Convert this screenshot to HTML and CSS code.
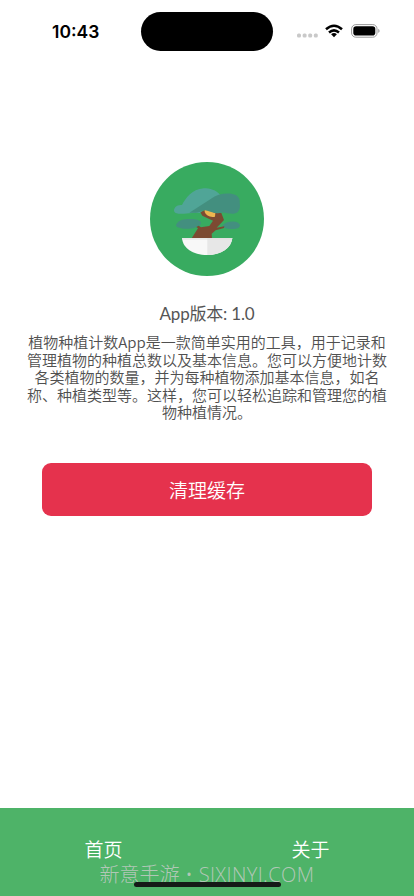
FILE: index.html
```html
<!DOCTYPE html>
<html lang="zh-CN">
<head>
<meta charset="utf-8">
<meta name="viewport" content="width=device-width, initial-scale=1">
<title>关于</title>
<link rel="stylesheet" href="styles.css">
</head>
<body>
<div class="screen">
  <header class="status">
    <div class="time">10:43</div>
    <div class="island"></div>
    <div class="indicators">
      <svg class="dots" viewBox="0 0 21 5"><g fill="#c9c9c9"><rect x="0" y=".5" width="4" height="4" rx="1.5"/><rect x="5.6" y=".5" width="4" height="4" rx="1.5"/><rect x="11.2" y=".5" width="4" height="4" rx="1.5"/><rect x="16.8" y=".5" width="4" height="4" rx="1.5"/></g></svg>
      <svg class="wifi" viewBox="0 0 18 14"><g fill="none" stroke="#000" stroke-width="2.5"><path d="M1 5.2Q9-1.8 17 5.2"/><path d="M4 8.5Q9 4.2 14 8.5"/></g><path d="M6.1 10.2Q9 7.8 11.9 10.2L9 13.2Z"/></svg>
      <svg class="battery" viewBox="0 0 29 14"><rect x=".6" y=".6" width="25.4" height="12.6" rx="4.2" fill="none" stroke="#999"/><rect x="2.3" y="2.2" width="22" height="9.4" rx="2.8"/><path d="M27.4 4.8Q29.6 6.9 27.4 9Z" fill="#888"/></svg>
    </div>
  </header>
  <main class="about">
    <svg class="logo" viewBox="29 34 342 342">
      <circle cx="200" cy="205" r="171" fill="#38ab60"/>
      <path d="M107 226C108 213 123 204 146 205C161 204 180 207 182 216C181 226 170 227 163 231C145 237 116 235 107 226Z" fill="#438f7f"/>
      <path d="M247 229C247 220 255 219 261 215C278 209 297 214 299 224C298 235 284 236 270 235C260 235 255 232 247 229Z" fill="#438f7f"/>
      <path d="M154 263L173 233L168 229L175 225L182 230L207 226L218 210L186 195L180 185L197 177L243 187L251 208L229 231L252 227L251 232L226 239L214 249L215 263Z" fill="#7c4a32"/>
      <path d="M193 174L225 187L224 198C209 201 197 195 193 184Z" fill="#edb650"/>
      <path d="M102 183C98 172 110 161 125 163C136 143 153 116 191 113C214 111 233 123 242 136L178 187C155 184 143 190 127 189C114 190 105 188 102 183Z" fill="#50a597"/>
      <path d="M147 186L211 145C230 131 255 126 276 130C291 132 301 145 298 157C302 174 294 188 280 189C261 190 253 182 237 187C222 191 206 180 191 178C178 187 161 187 147 186Z" fill="#438f7f"/>
      <path d="M125 262H276C273 292 243 313 200 313C157 313 127 292 125 262Z" fill="#f8f8f8"/>
      <path d="M201 262H276C273 292 243 313 201 313Z" fill="#e7e7e7"/>
      <path d="M125 262H276L275 267H126Z" fill="#ddd" opacity=".6"/>
    </svg>
    <h1 class="version">App版本: 1.0</h1>
    <p class="description">植物种植计数App是一款简单实用的工具，用于记录和<br>管理植物的种植总数以及基本信息。您可以方便地计数<br>各类植物的数量，并为每种植物添加基本信息，如名<br>称、种植类型等。这样，您可以轻松追踪和管理您的植<br>物种植情况。</p>
    <button class="clear">清理缓存</button>
  </main>
  <nav class="tabs">
    <a class="tab">首页</a>
    <a class="tab">关于</a>
    <div class="watermark">新意手游<span class="latin"> • SJXINYI.COM</span></div>
    <div class="home-bar"></div>
  </nav>
</div>
</body>
</html>
```
FILE: styles.css
```css
* { box-sizing: border-box; }
body {
  margin: 0;
  background: #fff;
  font-family: "Noto Sans CJK SC", sans-serif;
}
.screen {
  height: 896px;
  display: flex;
  flex-direction: column;
  overflow: hidden;
}
.status {
  height: 62px;
  display: grid;
  grid-template-columns: 141px 132px 1fr;
  padding-top: 12px;
}
.time {
  padding-left: 52px;
  font: 600 17.5px/39px Inter, sans-serif;
}
.island {
  height: 39px;
  border-radius: 20px;
  background: #000;
}
.indicators {
  height: 38px;
  display: flex;
  align-items: center;
  padding-left: 24px;
}
.dots { width: 21px; height: 5px; margin-top: 9px; }
.wifi { width: 18px; height: 14px; margin-left: 7px; }
.battery { width: 29px; height: 14px; margin-left: 8px; }
.about {
  flex: 1;
  display: flex;
  flex-direction: column;
  align-items: center;
  padding-top: 99.5px;
}
.logo { width: 114px; height: 114px; flex: none; }
.version {
  margin: 26px 0 0;
  font-family: Lato, "Noto Sans CJK SC", sans-serif;
  font-size: 17px;
  font-weight: 400;
  letter-spacing: -.2px;
  line-height: 24px;
  color: #555;
}
.description {
  margin: 7.5px 0 0;
  font-size: 15px;
  font-weight: 350;
  line-height: 17.6px;
  text-align: center;
  white-space: nowrap;
  color: #505050;
}
.clear {
  width: 330px;
  height: 53px;
  margin-top: 42px;
  padding: 0;
  border: 0;
  border-radius: 9px;
  background: #e5324d;
  color: #fff;
  font: 350 19px/53px "Noto Sans CJK SC", sans-serif;
}
.tabs {
  position: relative;
  height: 88px;
  display: grid;
  grid-template-columns: 1fr 1fr;
  background: #4eb368;
}
.tab {
  padding-top: 27px;
  text-align: center;
  font-size: 19px;
  font-weight: 350;
  line-height: 28px;
  color: #fff;
}
.home-bar {
  position: absolute;
  left: 134px;
  bottom: 9px;
  width: 147px;
  height: 5px;
  border-radius: 3px;
  background: #151a17;
}
.watermark {
  position: absolute;
  left: 0;
  right: 0;
  top: 53px;
  text-align: center;
  font-family: "Open Sans", "Noto Sans CJK SC", sans-serif;
  font-size: 20px;
  font-weight: 300;
  line-height: 28px;
  white-space: nowrap;
  color: rgba(205, 205, 205, .8);
}
.latin { letter-spacing: .4px; }
```
